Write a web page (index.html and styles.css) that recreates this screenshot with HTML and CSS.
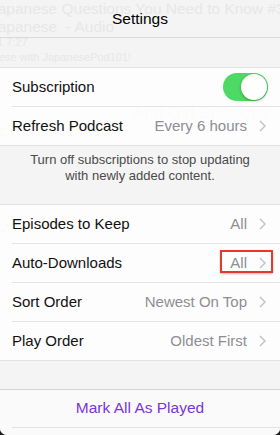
FILE: index.html
```html
<!DOCTYPE html>
<html>
<head>
<meta charset="utf-8">
<link rel="stylesheet" href="styles.css">
</head>
<body>
<div class="screen">
  <div class="ghost">
    <div class="g1">Japanese Questions You Need to Know #3</div>
    <div class="g2">Japanese&nbsp; - Audio</div>
    <div class="g3">1 7:27</div>
    <div class="g4">ese with JapanesePod101!</div>
    <div class="g5">Add Old Episodes</div>
  </div>
  <div class="content">
    <header class="header">Settings</header>
    <div class="gap-top"></div>
    <section class="group">
      <div class="row">
        <span class="label">Subscription</span>
        <span class="toggle"><span class="knob"></span></span>
      </div>
      <div class="row">
        <span class="label">Refresh Podcast</span>
        <span class="value">Every 6 hours</span>
        <svg class="chev" width="7" height="12" viewBox="0 0 7 12"><path d="M1 1l5 5-5 5" fill="none" stroke="#c4c4c9" stroke-width="1.5"/></svg>
      </div>
    </section>
    <p class="note">Turn off subscriptions to stop updating<br>with newly added content.</p>
    <section class="group">
      <div class="row">
        <span class="label">Episodes to Keep</span>
        <span class="value">All</span>
        <svg class="chev" width="7" height="12" viewBox="0 0 7 12"><path d="M1 1l5 5-5 5" fill="none" stroke="#c4c4c9" stroke-width="1.5"/></svg>
      </div>
      <div class="row">
        <span class="label">Auto-Downloads</span>
        <span class="value">All</span>
        <svg class="chev" width="7" height="12" viewBox="0 0 7 12"><path d="M1 1l5 5-5 5" fill="none" stroke="#c4c4c9" stroke-width="1.5"/></svg>
        <span class="highlight"></span>
      </div>
      <div class="row">
        <span class="label">Sort Order</span>
        <span class="value">Newest On Top</span>
        <svg class="chev" width="7" height="12" viewBox="0 0 7 12"><path d="M1 1l5 5-5 5" fill="none" stroke="#c4c4c9" stroke-width="1.5"/></svg>
      </div>
      <div class="row">
        <span class="label">Play Order</span>
        <span class="value">Oldest First</span>
        <svg class="chev" width="7" height="12" viewBox="0 0 7 12"><path d="M1 1l5 5-5 5" fill="none" stroke="#c4c4c9" stroke-width="1.5"/></svg>
      </div>
    </section>
    <div class="gap-bottom"></div>
    <section class="actions">
      <div class="action">Mark All As Played</div>
    </section>
  </div>
</div>
</body>
</html>
```
FILE: styles.css
```css
html, body {
  margin: 0;
  padding: 0;
  background: #1c1c1c;
}
body {
  width: 280px;
  height: 435px;
  overflow: hidden;
  font-family: "Liberation Sans", Arial, sans-serif;
}
.screen {
  position: relative;
  width: 280px;
  height: 435px;
  background: #f4f4f4;
  border-radius: 0 0 7px 7px;
  overflow: hidden;
}
.ghost {
  position: absolute;
  top: 0;
  left: 0;
  width: 280px;
  height: 140px;
  z-index: 0;
  color: #e7e7e7;
  white-space: nowrap;
}
.ghost div {
  position: absolute;
}
.g1 { top: 0; left: -10px; font-size: 15.5px; }
.g2 { top: 18px; left: -10px; font-size: 15.5px; }
.g3 { top: 36px; left: -3px; font-size: 11px; }
.g4 { top: 51px; left: -1px; font-size: 11px; }
.g5 { top: 104px; left: 133px; font-size: 17px; color: #ebebeb; }
.content {
  position: relative;
  z-index: 1;
  display: flex;
  flex-direction: column;
}
.header {
  height: 37px;
  line-height: 37px;
  text-align: center;
  font-size: 15.5px;
  color: #000;
  border-bottom: 1px solid #dadada;
}
.gap-top {
  height: 29px;
}
.group {
  background: rgba(255, 255, 255, 0.8);
  border-top: 1px solid #e2e2e2;
  border-bottom: 1px solid #e2e2e2;
  display: flex;
  flex-direction: column;
}
.row {
  position: relative;
  height: 38px;
  display: flex;
  align-items: center;
  padding: 0 14px 0 12px;
  font-size: 15px;
  line-height: 18px;
  color: #111;
}
.row + .row::before {
  content: "";
  position: absolute;
  top: -1px;
  left: 12px;
  right: 0;
  height: 1px;
  background: #e4e4e4;
}
.row + .row {
  margin-top: 1px;
}
.label {
  flex: 1;
  padding-bottom: 1px;
}
.value {
  color: #8e8e93;
  margin-right: 12px;
  padding-bottom: 1px;
}
.chev {
  display: block;
}
.toggle {
  position: relative;
  width: 45px;
  height: 28px;
  margin-right: -2px;
  border-radius: 14px;
  background: #4cd964;
}
.knob {
  position: absolute;
  top: 1px;
  right: 1px;
  width: 26px;
  height: 26px;
  border-radius: 50%;
  background: #fff;
  box-shadow: 0 1px 3px rgba(0, 0, 0, 0.3);
}
.note {
  margin: 0;
  height: 58px;
  padding-top: 6px;
  box-sizing: border-box;
  text-align: center;
  font-size: 13px;
  line-height: 16px;
  color: #4a4a4a;
}
.highlight {
  position: absolute;
  top: 6px;
  right: 7px;
  width: 53px;
  height: 23px;
  box-sizing: border-box;
  border: 2px solid #e5392c;
  box-shadow: 0 1px 2px rgba(0, 0, 0, 0.25);
}
.gap-bottom {
  height: 28px;
}
.actions {
  background: #fafafa;
  border-top: 1px solid #d4d4d4;
  height: 46px;
}
.action {
  height: 37px;
  margin-left: 12px;
  line-height: 36px;
  text-align: center;
  padding-right: 12px;
  font-size: 15.5px;
  color: #7b35dc;
  border-bottom: 1px solid #e2e2e2;
}
```
